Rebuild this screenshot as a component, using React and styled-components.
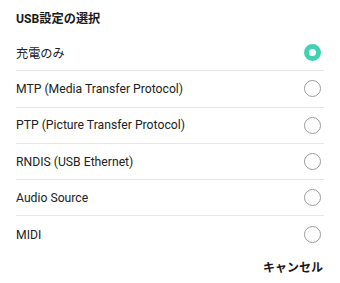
import React, { useState } from 'react';
import styled, { createGlobalStyle } from 'styled-components';

const GlobalStyle = createGlobalStyle`
  html, body {
    margin: 0;
    padding: 0;
    background: #fff;
  }
  body {
    font-family: Roboto, "Noto Sans CJK JP", "Liberation Sans", sans-serif;
    color: #222;
  }
`;

const options = [
    '充電のみ',
    'MTP (Media Transfer Protocol)',
    'PTP (Picture Transfer Protocol)',
    'RNDIS (USB Ethernet)',
    'Audio Source',
    'MIDI'
];

export default function App() {
    const [selected, setSelected] = useState(0);

    return (
        <>
            <GlobalStyle />
            <Dialog>
                <Title>USB設定の選択</Title>
                <List>
                    {options.map((label, i) => (
                        <Row key={i} $last={i === options.length - 1} onClick={() => setSelected(i)}>
                            <Label>{label}</Label>
                            <Radio $checked={selected === i} />
                        </Row>
                    ))}
                </List>
                <Footer>
                    <CancelButton>キャンセル</CancelButton>
                </Footer>
            </Dialog>
        </>
    );
}

const Dialog = styled.div`
    width: 340px;
    height: 283px;
    box-sizing: border-box;
    padding: 0 16px;
    display: flex;
    flex-direction: column;
    background: #fff;
`;

const Title = styled.div`
    height: 35px;
    flex-shrink: 0;
    display: flex;
    align-items: center;
    font-size: 12.2px;
    font-weight: bold;
    color: #1a1a1a;
`;

const List = styled.div`
    display: flex;
    flex-direction: column;
`;

const Row = styled.div`
    height: 36.3px;
    box-sizing: border-box;
    flex-shrink: 0;
    display: flex;
    align-items: center;
    justify-content: space-between;
    border-bottom: ${p => (p.$last ? 'none' : '1px solid #e6e6e6')};
    cursor: pointer;
`;

const Label = styled.div`
    font-size: 12.2px;
    color: #222;
`;

const Radio = styled.div`
    width: 17px;
    height: 17px;
    box-sizing: border-box;
    margin-right: 3px;
    border-radius: 50%;
    border: ${p => (p.$checked ? '5px solid #40d3b3' : '1px solid #9a9a9a')};
    background: #fff;
`;

const Footer = styled.div`
    flex: 1;
    display: flex;
    align-items: center;
    justify-content: flex-end;
    padding-bottom: 3px;
`;

const CancelButton = styled.div`
    font-size: 12px;
    font-weight: bold;
    color: #1a1a1a;
    margin-right: 1px;
    cursor: pointer;
`;
